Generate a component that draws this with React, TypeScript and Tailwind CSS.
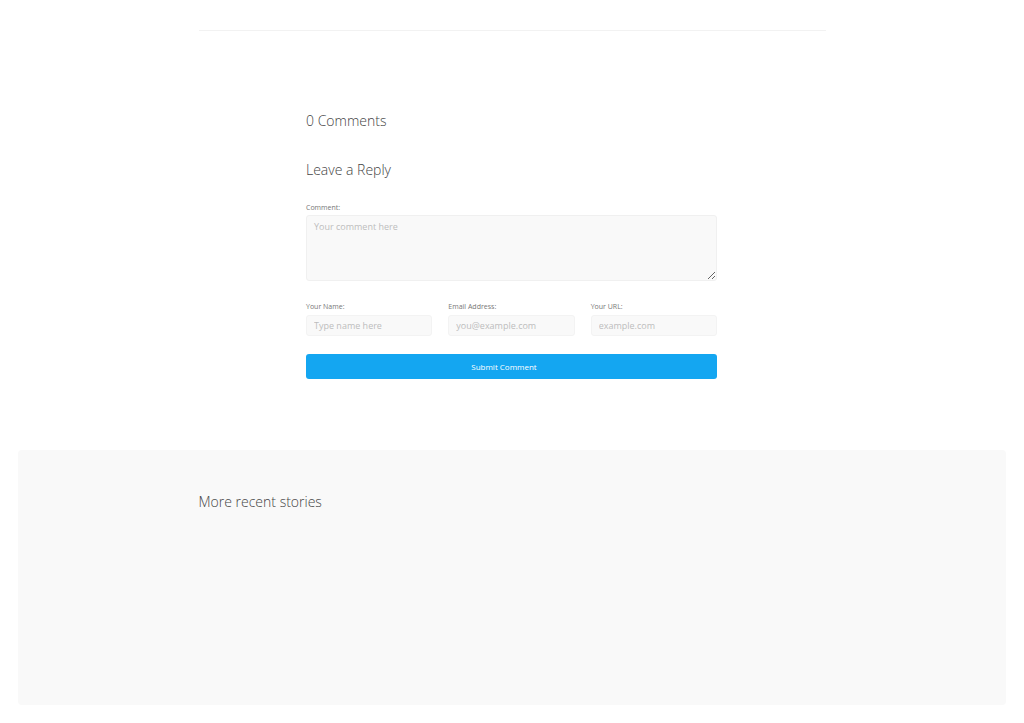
export default function App() {
  const font = { fontFamily: '"Open Sans", "Noto Sans", sans-serif' };
  return (
    <div className="min-h-[723px] bg-white pt-[30px]" style={font}>
      <div className="mx-auto w-[627px] border-t border-[#f2f2f2]" />
      <div className="ml-[306px] w-[411px]">
        <h2 className="mt-[80px] text-[14px] leading-[20px] font-light text-[#444]">0 Comments</h2>
        <h3 className="mt-[29px] text-[14px] leading-[20px] font-light text-[#444]">Leave a Reply</h3>
        <form className="flex flex-col">
          <label className="mt-[23px] text-[7px] leading-[10px] text-[#777]">Comment:</label>
          <textarea
            placeholder="Your comment here"
            className="mt-[2px] h-[66px] w-full resize-y rounded-[3px] border border-[#f0f0f0] bg-[#f9f9f9] px-[7px] py-[4px] text-[9px] leading-[14px] text-[#555] placeholder:text-[#bdbdbd] outline-none"
          />
          <div className="mt-[21px] grid grid-cols-3 gap-x-[16px]">
            {[
              ['Your Name:', 'Type name here'],
              ['Email Address:', 'you@example.com'],
              ['Your URL:', 'example.com'],
            ].map(([l, p]) => (
              <div key={l} className="flex flex-col">
                <label className="text-[7px] leading-[10px] text-[#777]">{l}</label>
                <input
                  placeholder={p}
                  className="mt-[3px] h-[21px] w-full rounded-[3px] border border-[#f3f3f3] bg-[#f9f9f9] px-[7px] text-[9px] text-[#555] placeholder:text-[#bdbdbd] outline-none"
                />
              </div>
            ))}
          </div>
          <button
            type="button"
            className="mt-[18px] h-[25px] w-full rounded-[3px] bg-[#14a6f1] pr-[15px] text-[8px] text-white"
          >
            Submit Comment
          </button>
        </form>
      </div>
      <section className="mx-[18px] mt-[71px] h-[255px] rounded-[4px] bg-[#f9f9f9] pt-[42px]">
        <div className="mx-auto w-[627px]">
          <h2 className="text-[14px] leading-[20px] font-light text-[#444]">More recent stories</h2>
        </div>
      </section>
    </div>
  );
}
